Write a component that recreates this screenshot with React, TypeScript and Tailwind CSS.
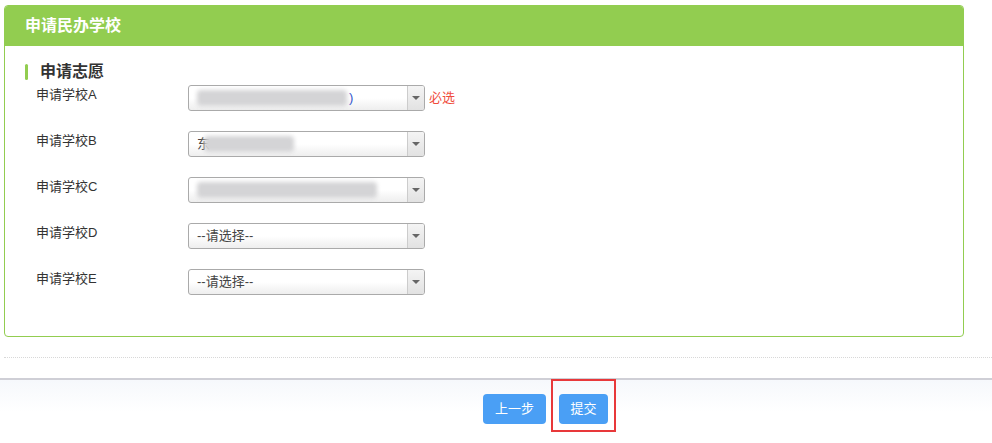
import React from "react";

const font = { fontFamily: '"Liberation Sans", "Noto Sans CJK SC", sans-serif' };

function Blur({ w, x = 0 }: { w: number; x?: number }) {
  return (
    <div
      className="h-[16px] bg-[#d4d4d6] blur-[2px] rounded-sm"
      style={{ width: w, marginLeft: x }}
    />
  );
}

function Select({ children, req }: { children?: React.ReactNode; req?: boolean }) {
  return (
    <div className="flex items-center">
      <div className="relative flex h-[26px] w-[237px] items-center overflow-hidden rounded-[3px] border border-[#aaaaaa] bg-gradient-to-b from-white from-50% to-[#eeeeee]">
        <div className="flex flex-1 items-center pl-[8px] text-[13px] text-[#444]">{children}</div>
        <div className="flex h-full w-[17px] items-center justify-center border-l border-[#cccccc] bg-gradient-to-b from-[#f4f4f4] to-[#e2e2e2]">
          <div className="h-0 w-0 border-x-[4px] border-t-[4px] border-x-transparent border-t-[#666]" />
        </div>
      </div>
      {req && <span className="ml-[4px] text-[13px] text-[#f04c3c]">必选</span>}
    </div>
  );
}

export default function App() {
  const rows = [
    { label: "申请学校A", content: <div className="flex items-center"><Blur w={150} /><span className="ml-[2px] text-[#3355cc]">)</span></div>, req: true },
    { label: "申请学校B", content: <div className="flex items-center"><span>东</span><Blur w={90} x={-6} /></div> },
    { label: "申请学校C", content: <Blur w={180} /> },
    { label: "申请学校D", content: <span>--请选择--</span> },
    { label: "申请学校E", content: <span>--请选择--</span> },
  ];
  return (
    <div className="h-[443px] w-[992px] overflow-hidden bg-white" style={font}>
      <div className="pl-[4px] pt-[5px]">
        <div className="h-[332px] w-[960px] overflow-hidden rounded-[4px] border border-[#92cd50]">
          <div className="flex h-[40px] items-center bg-[#92cd50] pl-[20px] text-[16px] font-bold text-white">
            申请民办学校
          </div>
          <div className="pl-[20px] pt-[14px]">
            <div className="flex h-[24px] items-center">
              <div className="h-[16px] w-[3px] rounded-sm bg-[#92cd50]" />
              <span className="ml-[12px] text-[16px] font-bold text-[#333]">申请志愿</span>
            </div>
            <div className="mt-[1px] flex flex-col gap-[20px]">
              {rows.map((r) => (
                <div key={r.label} className="flex items-start">
                  <div className="w-[163px] pl-[11px] pt-[0px] text-[13px] text-[#333]">{r.label}</div>
                  <Select req={r.req}>{r.content}</Select>
                </div>
              ))}
            </div>
          </div>
        </div>
      </div>
      <div className="ml-[4px] mt-[20px] border-t border-dotted border-[#d8d8d8]" />
      <div className="mt-[20px] h-[2px] bg-[#cfcfd6]" />
      <div className="relative h-[62px]">
        <div className="absolute inset-x-0 top-0 h-[32px] bg-gradient-to-b from-[#f6f8fc] to-white" />
        <div className="relative flex pl-[483px] pt-[14px]">
          <button className="h-[30px] w-[63px] rounded-[4px] bg-[#4a9ff5] text-[13px] text-white">上一步</button>
          <div className="relative ml-[13px]">
            <div className="absolute left-[-8px] top-[-15px] h-[53px] w-[65px] border-2 border-[#e8383a]" />
            <button className="h-[30px] w-[49px] rounded-[4px] bg-[#4a9ff5] text-[13px] text-white">提交</button>
          </div>
        </div>
      </div>
    </div>
  );
}
